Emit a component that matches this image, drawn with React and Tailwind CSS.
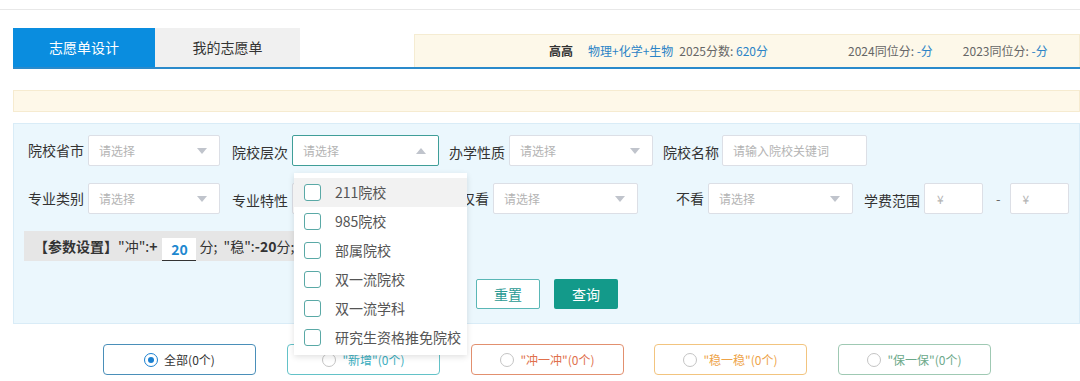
import React from "react";

const font = { fontFamily: '"Noto Sans CJK SC", "Noto Sans", sans-serif' };

function Arrow({ up }) {
  return (
    <svg width="10" height="6" viewBox="0 0 10 6" className="shrink-0">
      {up ? <path d="M0 6 L5 0 L10 6 Z" fill="#c0c4cc" /> : <path d="M0 0 L5 6 L10 0 Z" fill="#c0c4cc" />}
    </svg>
  );
}

function Select({ w, focus, up, children }) {
  return (
    <div
      className={`relative flex h-[31px] items-center justify-between rounded-[2px] border bg-white pl-[10px] pr-[12px] ${
        focus ? "border-[#3f9e98]" : "border-[#dcdfe6]"
      }`}
      style={{ width: w }}
    >
      <span className="text-[12px] text-[#b4b4b4]">请选择</span>
      <Arrow up={up} />
      {children}
    </div>
  );
}

function Label({ children, w, right }) {
  return (
    <span
      className={`shrink-0 text-[14px] text-[#333] ${right ? "text-right" : ""}`}
      style={w ? { width: w } : undefined}
    >
      {children}
    </span>
  );
}

const items = ["211院校", "985院校", "部属院校", "双一流院校", "双一流学科", "研究生资格推免院校"];

function Dropdown() {
  return (
    <div className="absolute left-[1px] top-[37px] z-10 w-[173px] bg-white pb-[3px] pt-[5px] shadow-[0_2px_6px_rgba(0,0,0,0.12)]">
      {items.map((t, i) => (
        <div
          key={t}
          className={`flex h-[29px] items-center pl-[10px] ${i === 0 ? "bg-[#f2f2f2]" : ""}`}
        >
          <span className="h-[17px] w-[17px] rounded-[3px] border-[1.5px] border-[#5aa9a6] bg-white" />
          <span className="ml-[14px] text-[14px] text-[#555]">{t}</span>
        </div>
      ))}
    </div>
  );
}

function Radio({ label, border, color, selected, ml }) {
  return (
    <div
      className="flex h-[31px] w-[153px] shrink-0 items-center justify-center rounded-[4px] border bg-white"
      style={{ borderColor: border, marginLeft: ml }}
    >
      {selected ? (
        <span className="flex h-[14px] w-[14px] items-center justify-center rounded-full border border-[#1a7fd0]">
          <span className="h-[6px] w-[6px] rounded-full bg-[#1a7fd0]" />
        </span>
      ) : (
        <span className="h-[14px] w-[14px] rounded-full border border-[#c4c4c4]" />
      )}
      <span className="ml-[6px] text-[12px]" style={{ color }}>
        {label}
      </span>
    </div>
  );
}

export default function App() {
  return (
    <div className="h-[381px] w-[1080px] overflow-hidden bg-white" style={font}>
      <div className="h-[10px] border-b border-[#e8e8e8]" />
      <div className="ml-[13px] mt-[18px]">
        {/* tabs */}
        <div className="flex items-end border-b-2 border-[#2a8acb]">
          <div className="flex h-[39px] w-[142px] items-center justify-center bg-[#0a8ddf] text-[14px] text-white">
            志愿单设计
          </div>
          <div className="flex h-[39px] w-[145px] items-center justify-center bg-[#f0f0f0] text-[14px] text-[#333]">
            我的志愿单
          </div>
          <div className="ml-[114px] flex h-[33px] flex-1 items-center border border-b-0 border-[#f5ecd2] bg-[#fdf8e9] pl-[134px] text-[12px] text-[#666]">
            <span className="font-bold text-[#333]">高高</span>
            <span className="ml-[15px] text-[#2b83c6]">物理+化学+生物</span>
            <span className="ml-[6px]">
              2025分数: <span className="text-[#2b83c6]">620分</span>
            </span>
            <span className="ml-[80px]">
              2024同位分: <span className="text-[#2b83c6]">-分</span>
            </span>
            <span className="ml-[30px]">
              2023同位分: <span className="text-[#2b83c6]">-分</span>
            </span>
          </div>
        </div>

        {/* yellow bar */}
        <div className="mt-[21px] h-[22px] border border-[#f6ebd0] bg-[#fef8e9]" />

        {/* filter panel */}
        <div className="mt-[11px] h-[201px] border border-[#d9ecf7] bg-[#ebf7fd] pl-[14px] pt-[11px]">
          <div className="flex items-center">
            <Label>院校省市</Label>
            <div className="ml-[4px]">
              <Select w={132} />
            </div>
            <div className="ml-[12px]">
              <Label>院校层次</Label>
            </div>
            <div className="ml-[4px]">
              <Select w={147} focus up>
                <Dropdown />
              </Select>
            </div>
            <div className="ml-[10px]">
              <Label>办学性质</Label>
            </div>
            <div className="ml-[4px]">
              <Select w={144} />
            </div>
            <div className="ml-[10px]">
              <Label>院校名称</Label>
            </div>
            <div className="ml-[3px] flex h-[31px] w-[145px] items-center rounded-[2px] border border-[#dcdfe6] bg-white pl-[10px] text-[12px] text-[#b4b4b4]">
              请输入院校关键词
            </div>
          </div>

          <div className="mt-[17px] flex items-center">
            <Label>专业类别</Label>
            <div className="ml-[4px]">
              <Select w={132} />
            </div>
            <div className="ml-[12px]">
              <Label>专业特性</Label>
            </div>
            <div className="ml-[4px]">
              <Select w={141} />
            </div>
            <Label w={56} right>
              仅看
            </Label>
            <div className="ml-[4px]">
              <Select w={145} />
            </div>
            <Label w={66} right>
              不看
            </Label>
            <div className="ml-[4px]">
              <Select w={145} />
            </div>
            <div className="ml-[11px]">
              <Label>学费范围</Label>
            </div>
            <div className="ml-[4px] flex h-[31px] w-[59px] items-center rounded-[2px] border border-[#dcdfe6] bg-white pl-[12px] text-[12px] text-[#b4b4b4]">
              ¥
            </div>
            <span className="ml-[13px] mr-[9px] text-[13px] text-[#666]">-</span>
            <div className="flex h-[31px] w-[59px] items-center rounded-[2px] border border-[#dcdfe6] bg-white pl-[12px] text-[12px] text-[#b4b4b4]">
              ¥
            </div>
          </div>

          <div className="ml-[-4px] mt-[17px] flex h-[30px] w-[420px] items-center overflow-hidden whitespace-nowrap bg-[#e6e6e6] pl-[10px] text-[14px] text-[#333]">
            <span className="font-bold">【参数设置】</span>
            <span>"冲":</span>
            <span className="font-bold">+</span>
            <span className="ml-[5px] flex h-[23px] w-[34px] items-center justify-center self-end border-b border-[#333] bg-white text-[14px] font-bold text-[#1e88d0]">
              20
            </span>
            <span className="ml-[3px]">分;&nbsp;&nbsp;"稳":</span>
            <span className="font-bold">-20</span>
            <span>分;&nbsp;&nbsp;"保":</span>
            <span className="font-bold">-20</span>
            <span>分】</span>
          </div>

          <div className="mt-[18px] flex items-center pl-[448px]">
            <div className="flex h-[30px] w-[64px] items-center justify-center rounded-[2px] border border-[#5ab7b6] bg-white text-[14px] text-[#2a9a94]">
              重置
            </div>
            <div className="ml-[14px] flex h-[30px] w-[64px] items-center justify-center rounded-[2px] bg-[#139a8a] text-[14px] text-white">
              查询
            </div>
          </div>
        </div>

        {/* radios */}
        <div className="mt-[20px] flex">
          <Radio label="全部(0个)" border="#4a8fb9" color="#333" selected ml={90} />
          <Radio label={'"新增"(0个)'} border="#63c2c8" color="#3aaec0" ml={31} />
          <Radio label={'"冲一冲"(0个)'} border="#e2906f" color="#e0704c" ml={31} />
          <Radio label={'"稳一稳"(0个)'} border="#f2c47f" color="#eea347" ml={30} />
          <Radio label={'"保一保"(0个)'} border="#9fc9b3" color="#6ca98a" ml={31} />
        </div>
      </div>
    </div>
  );
}
